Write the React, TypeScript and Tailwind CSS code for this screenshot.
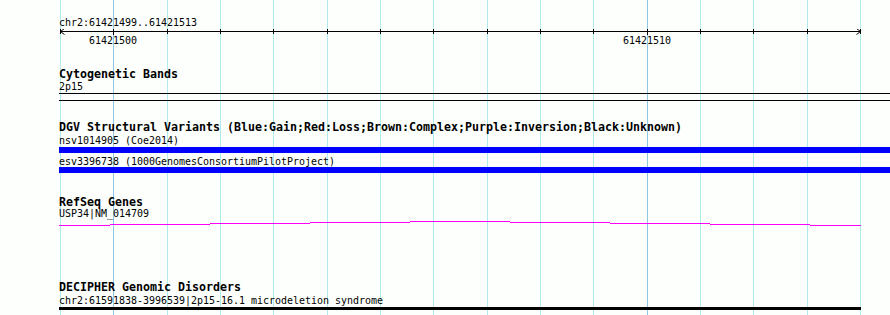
import React from "react";

// grid: one line per bp, 800px for 15bp starting at x=60
const GRID_X = Array.from({ length: 16 }, (_, k) => Math.round(60 + (k * 160) / 3));
const MAJOR = new Set([1, 11]);

const ARC = [
  [59, 110, 225],
  [110, 210, 224],
  [210, 310, 223],
  [310, 410, 222],
  [410, 510, 221],
  [510, 610, 222],
  [610, 710, 223],
  [710, 810, 224],
  [810, 861, 225],
];

function GridLines() {
  return (
    <svg className="absolute inset-0" width={890} height={315}>
      {GRID_X.map((x, k) => (
        <line
          key={k}
          x1={x + 0.5}
          x2={x + 0.5}
          y1={0}
          y2={315}
          stroke={MAJOR.has(k) ? "#8ec8e6" : "#aeeaee"}
          strokeWidth={1}
          shapeRendering="crispEdges"
        />
      ))}
    </svg>
  );
}

function Ruler() {
  return (
    <div className="flex flex-col">
      <div className="pt-[16px] pl-[59px] h-[29px] text-[9.97px] leading-[13px]">chr2:61421499..61421513</div>
      <div className="relative h-[18px]">
        <svg className="absolute left-0 top-0" width={890} height={18} shapeRendering="crispEdges">
          <line x1={60} x2={861} y1={2.5} y2={2.5} stroke="#000" />
          {GRID_X.map((x, k) => (
            <line
              key={k}
              x1={x + 0.5}
              x2={x + 0.5}
              y1={MAJOR.has(k) ? -1 : 0}
              y2={MAJOR.has(k) ? 6 : 5}
              stroke="#000"
            />
          ))}
          <polyline points="64.5,-0.5 60.5,2.5 64.5,5.5" fill="none" stroke="#000" shapeRendering="auto" />
          <polyline points="856.5,-0.5 860.5,2.5 856.5,5.5" fill="none" stroke="#000" shapeRendering="auto" />
        </svg>
        <span className="absolute top-[5px] left-[89px] text-[9.97px] leading-[13px]">61421500</span>
        <span className="absolute top-[5px] left-[623px] text-[9.97px] leading-[13px]">61421510</span>
      </div>
    </div>
  );
}

function Title({ children, className }: { children: React.ReactNode; className: string }) {
  return <div className={`font-bold text-[11.63px] leading-[13px] whitespace-nowrap ${className}`}>{children}</div>;
}

function Sub({ children, className }: { children: React.ReactNode; className: string }) {
  return <div className={`text-[9.97px] leading-[13px] whitespace-nowrap ${className}`}>{children}</div>;
}

export default function App() {
  return (
    <div className="relative w-[890px] h-[315px] overflow-hidden bg-[#fcfffc] text-black font-['DejaVu_Sans_Mono',monospace]">
      <GridLines />
      <div className="relative flex flex-col">
        <Ruler />
        <div className="flex flex-col pl-[59px]">
          {/* Cytogenetic Bands */}
          <Title className="mt-[21px] h-[12px]">Cytogenetic Bands</Title>
          <Sub className="h-[13px]">2p15</Sub>
          <div className="h-[8px] border-y border-black" />

          {/* DGV */}
          <Title className="mt-[20px] h-[13px]">
            DGV Structural Variants (Blue:Gain;Red:Loss;Brown:Complex;Purple:Inversion;Black:Unknown)
          </Title>
          <Sub className="h-[13px]">nsv1014905 (Coe2014)</Sub>
          <div className="h-[6px] bg-[#0000ff]" />
          <Sub className="mt-[2px] h-[12px]">esv3396738 (1000GenomesConsortiumPilotProject)</Sub>
          <div className="h-[6px] bg-[#0000ff]" />

          {/* RefSeq */}
          <Title className="mt-[23px] h-[11px]">RefSeq Genes</Title>
          <Sub className="h-[13px]">USP34|NM_014709</Sub>
          <svg width={802} height={8} shapeRendering="crispEdges">
            {ARC.map(([a, b, y], i) => (
              <line key={i} x1={a - 59} x2={b - 59} y1={y - 220 + 0.5} y2={y - 220 + 0.5} stroke="#ff00ff" />
            ))}
          </svg>

          {/* DECIPHER */}
          <Title className="mt-[53px] h-[13px]">DECIPHER Genomic Disorders</Title>
          <Sub className="h-[13px]">chr2:61591838-3996539|2p15-16.1 microdeletion syndrome</Sub>
          <div className="w-[802px] h-[3px] bg-black" />
        </div>
      </div>
    </div>
  );
}
